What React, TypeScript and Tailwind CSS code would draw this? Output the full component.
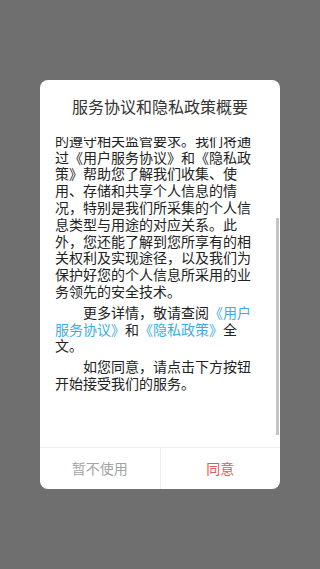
import React, { useLayoutEffect, useRef } from "react";

const link = "text-[#3aaee6]";

type Seg = string | { t: string; link: true };
type Line = { segs: Seg[]; indent?: boolean };

const P1: Line[] = [
  { segs: ["欢迎您使用我们的产品和服务！"], indent: true },
  { segs: ["我们深知个人信息对您的重要性"] },
  { segs: ["我们将按照法律法规的规定保护"] },
  { segs: ["您的个人信息及隐私安全。我们"] },
  { segs: ["制定本概要并特别提示您在使用"] },
  { segs: ["我们的服务前仔细阅读以及在处"] },
  { segs: ["的遵守相关监管要求。我们将通"] },
  { segs: ["过《用户服务协议》和《隐私政"] },
  { segs: ["策》帮助您了解我们收集、使"] },
  { segs: ["用、存储和共享个人信息的情"] },
  { segs: ["况，特别是我们所采集的个人信"] },
  { segs: ["息类型与用途的对应关系。此"] },
  { segs: ["外，您还能了解到您所享有的相"] },
  { segs: ["关权利及实现途径，以及我们为"] },
  { segs: ["保护好您的个人信息所采用的业"] },
  { segs: ["务领先的安全技术。"] },
];

const P2: Line[] = [
  { segs: ["更多详情，敬请查阅", { t: "《用户", link: true }], indent: true },
  { segs: [{ t: "服务协议》", link: true }, "和", { t: "《隐私政策》", link: true }, "全"] },
  { segs: ["文。"] },
];

const P3: Line[] = [
  { segs: ["如您同意，请点击下方按钮"], indent: true },
  { segs: ["开始接受我们的服务。"] },
];

function Para({ lines, className }: { lines: Line[]; className?: string }) {
  return (
    <div className={className}>
      {lines.map((l, i) => (
        <div key={i} className={"whitespace-nowrap " + (l.indent ? "pl-[28px]" : "")}>
          {l.segs.map((s, j) =>
            typeof s === "string" ? (
              <span key={j}>{s}</span>
            ) : (
              <span key={j} className={link}>
                {s.t}
              </span>
            )
          )}
        </div>
      ))}
    </div>
  );
}

export default function App() {
  const ref = useRef<HTMLDivElement>(null);
  useLayoutEffect(() => {
    if (ref.current) ref.current.scrollTop = 106;
  }, []);
  return (
    <div
      className="w-[320px] h-[569px] bg-[#6f6f6f] flex items-center justify-center"
      style={{ fontFamily: '"Noto Sans CJK SC", "Noto Sans", sans-serif' }}
    >
      <div className="w-[240px] h-[409px] bg-white rounded-[8px] flex flex-col overflow-hidden">
        <div className="h-[57px] shrink-0 flex justify-center pt-[15px] text-[16px] leading-[22px] text-[#333333]">
          服务协议和隐私政策概要
        </div>
        <div className="relative h-[310px] shrink-0">
          <div
            ref={ref}
            className="h-full overflow-y-scroll [scrollbar-width:none] [&::-webkit-scrollbar]:hidden pl-[15px] pr-[10px] text-[14px] leading-[16.8px] text-[#222222]"
          >
            <Para lines={P1} />
            <Para lines={P2} className="mt-[4px]" />
            <Para lines={P3} className="mt-[4px] pb-[80px]" />
          </div>
          <div className="absolute right-[1px] top-[81px] w-[3px] h-[217px] bg-[#c4c4c4]" />
        </div>
        <div className="flex-1 flex border-t border-[#eeeeee]">
          <div className="flex-1 flex items-center justify-center text-[14px] text-[#a3a3a3] border-r border-[#eeeeee]">
            暂不使用
          </div>
          <div className="flex-1 flex items-center justify-center text-[14px] text-[#df5b56]">同意</div>
        </div>
      </div>
    </div>
  );
}
